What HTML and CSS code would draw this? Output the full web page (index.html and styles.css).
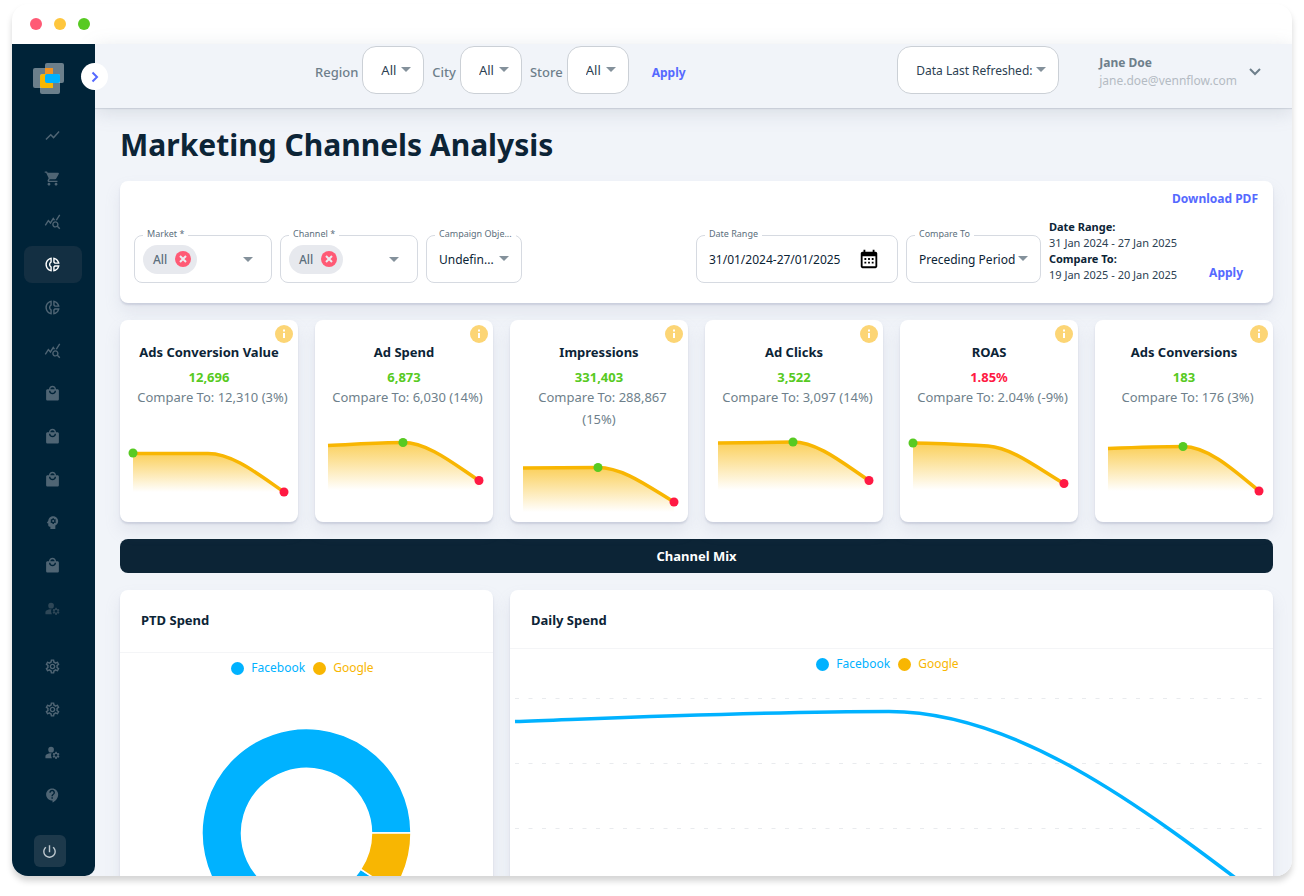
FILE: index.html
```
<!DOCTYPE html>
<html lang="en">
<head>
<meta charset="utf-8">
<meta name="viewport" content="width=device-width, initial-scale=1">
<title>Marketing Channels Analysis</title>
<link rel="stylesheet" href="styles.css">
</head>
<body>
<svg class="defs" width="0" height="0" aria-hidden="true">
  <defs>
    <linearGradient id="fade" x1="0" y1="0" x2="0" y2="1"><stop offset="0" stop-color="#f8b602" stop-opacity=".65"/><stop offset="1" stop-color="#f8b602" stop-opacity="0"/></linearGradient>
    <symbol id="i-line" viewBox="0 0 24 24"><path d="m3.5 18.49 6-6.01 4 4L22 6.92l-1.41-1.41-7.09 7.97-4-4L2 16.99z"/></symbol>
    <symbol id="i-cart" viewBox="0 0 24 24"><path d="M7 18c-1.1 0-1.99.9-1.99 2S5.900 22 7 22s2-.9 2-2-.9-2-2-2zM1 2v2h2l3.600 7.590-1.350 2.450c-.16.28-.25.61-.25.96 0 1.100.9 2 2 2h12v-2H7.420c-.14 0-.25-.11-.25-.25l.03-.12.9-1.630h7.450c.75 0 1.410-.41 1.750-1.030l3.580-6.490c.08-.14.12-.31.12-.48 0-.55-.45-1-1-1H5.210l-.94-2H1zm16 16c-1.100 0-1.990.9-1.990 2s.89 2 1.990 2 2-.9 2-2-.9-2-2-2z"/></symbol>
    <symbol id="i-query" viewBox="0 0 24 24"><path d="M19.880 18.470c.44-.7.7-1.510.7-2.390 0-2.490-2.010-4.500-4.500-4.500s-4.500 2.010-4.500 4.500 2.010 4.500 4.490 4.500c.88 0 1.700-.26 2.390-.7L21.580 23 23 21.580l-3.120-3.110zm-3.800.11c-1.380 0-2.500-1.120-2.500-2.500s1.120-2.500 2.500-2.500 2.500 1.120 2.500 2.500-1.120 2.500-2.500 2.500zm-.36-8.500c-.74.02-1.450.18-2.100.45l-.55-.83-3.800 6.180-3.010-3.520-3.630 5.810L1 17l5-8 3 3.500L13 6c1 1.330 2.720 4.080 2.720 4.080zm2.590.5c-.64-.28-1.330-.45-2.050-.49L21.380 2 23 3.180l-4.690 7.400z"/></symbol>
    <symbol id="i-donut" viewBox="0 0 24 24"><path d="M14.820 11h7.130c-.47-4.720-4.230-8.480-8.950-8.950v7.130c.85.31 1.510.97 1.820 1.820zM15 4.580C17 5.400 18.600 7 19.420 9h-3.430c-.28-.37-.62-.71-.99-.99V4.580zM2 12c0 5.190 3.950 9.450 9 9.950v-7.130C9.840 14.400 9 13.300 9 12c0-1.300.84-2.400 2-2.820V2.050c-5.050.5-9 4.760-9 9.950zm7-7.420v3.440c-1.230.92-2 2.390-2 3.980 0 1.590.77 3.060 2 3.990v3.440C6.040 18.240 4 15.350 4 12c0-3.350 2.040-6.240 5-7.420zm4 10.240v7.130c4.720-.47 8.480-4.230 8.950-8.950h-7.130c-.31.85-.97 1.510-1.820 1.820zm2 1.170c.37-.28.71-.61.99-.99h3.430C18.600 17 17 18.600 15 19.420v-3.430z"/></symbol>
    <symbol id="i-bag" viewBox="0 0 24 24"><path d="M19 6h-2c0-2.760-2.240-5-5-5S7 3.240 7 6H5c-1.100 0-1.990.9-1.990 2L3 20c0 1.100.9 2 2 2h14c1.100 0 2-.9 2-2V8c0-1.100-.9-2-2-2zm-7-3c1.660 0 3 1.340 3 3H9c0-1.660 1.340-3 3-3zm0 10c-2.760 0-5-2.240-5-5h2c0 1.660 1.340 3 3 3s3-1.340 3-3h2c0 2.760-2.240 5-5 5z"/></symbol>
    <symbol id="i-mind" viewBox="0 0 24 24"><path d="M13 8.570c-.79 0-1.430.64-1.430 1.430s.64 1.430 1.430 1.430 1.430-.64 1.430-1.430-.64-1.430-1.430-1.430z"/><path d="M13 3C9.250 3 6.200 5.940 6.020 9.640L4.100 12.200c-.25.33-.01.8.4.8H6v3c0 1.100.9 2 2 2h1v3h7v-4.680c2.360-1.120 4-3.530 4-6.320 0-3.870-3.130-7-7-7zm3 7c0 .13-.01.26-.02.39l.83.66c.08.06.1.16.05.25l-.8 1.390c-.05.09-.16.12-.24.09l-.99-.4c-.21.16-.43.29-.67.39L14 13.830c-.01.1-.1.17-.2.17h-1.600c-.1 0-.18-.07-.2-.17l-.15-1.060c-.25-.1-.47-.23-.68-.39l-.99.4c-.09.03-.2 0-.25-.09l-.8-1.390c-.05-.08-.03-.19.05-.25l.84-.66c-.01-.13-.02-.26-.02-.39s.02-.27.04-.39l-.85-.66c-.08-.06-.1-.16-.05-.26l.8-1.380c.05-.09.15-.12.24-.09l1 .4c.2-.15.43-.29.67-.39L12 6.170c.02-.1.1-.17.2-.17h1.600c.1 0 .18.07.2.17l.15 1.060c.24.1.46.23.67.39l1-.4c.09-.03.2 0 .24.09l.8 1.380c.05.09.03.2-.05.26l-.85.66c.03.12.04.25.04.39z"/></symbol>
    <symbol id="i-user" viewBox="0 0 24 24"><circle cx="10" cy="8" r="4"/><path d="M10.670 13.020c-.22-.01-.44-.02-.67-.02-2.420 0-4.680.67-6.610 1.820-.88.52-1.390 1.500-1.390 2.530V20h9.260c-.79-1.130-1.260-2.510-1.260-4 0-1.070.25-2.070.67-2.980zM20.750 16c0-.22-.03-.42-.06-.63l1.140-1.010-1-1.730-1.450.49c-.32-.27-.68-.48-1.080-.63L18 11h-2l-.3 1.490c-.4.15-.76.36-1.080.63l-1.450-.49-1 1.730 1.140 1.010c-.03.21-.06.41-.06.63s.03.42.06.63l-1.140 1.010 1 1.730 1.450-.49c.32.27.68.48 1.080.63L16 21h2l.3-1.490c.4-.15.76-.36 1.080-.63l1.450.49 1-1.730-1.140-1.010c.03-.21.06-.41.06-.63zM17 18c-1.100 0-2-.9-2-2s.9-2 2-2 2 .9 2 2-.9 2-2 2z"/></symbol>
    <symbol id="i-gear" viewBox="0 0 24 24"><path d="M19.430 12.980c.04-.32.07-.64.07-.98 0-.34-.03-.66-.07-.98l2.110-1.650c.19-.15.24-.42.12-.64l-2-3.460c-.09-.16-.26-.25-.44-.25-.06 0-.12.01-.17.03l-2.490 1c-.52-.4-1.080-.73-1.690-.98l-.38-2.650C14.460 2.180 14.250 2 14 2h-4c-.25 0-.46.18-.49.42l-.38 2.650c-.61.25-1.170.59-1.690.98l-2.490-1c-.06-.02-.12-.03-.18-.03-.17 0-.34.09-.43.25l-2 3.460c-.13.22-.07.49.12.64l2.110 1.650c-.04.32-.07.65-.07.98 0 .33.03.66.07.98l-2.110 1.650c-.19.15-.24.42-.12.64l2 3.460c.09.16.26.25.44.25.06 0 .12-.01.17-.03l2.490-1c.52.4 1.080.73 1.690.98l.38 2.650c.03.24.24.42.49.42h4c.25 0 .46-.18.49-.42l.38-2.650c.61-.25 1.170-.59 1.690-.98l2.490 1c.06.02.12.03.18.03.17 0 .34-.09.43-.25l2-3.460c.12-.22.07-.49-.12-.64l-2.110-1.650zm-1.980-1.710c.04.31.05.52.05.73 0 .21-.02.43-.05.73l-.14 1.130.89.7 1.080.84-.7 1.210-1.270-.51-1.040-.42-.9.68c-.43.32-.84.56-1.250.73l-1.060.43-.16 1.130-.2 1.350h-1.400l-.19-1.350-.16-1.130-1.060-.43c-.43-.18-.83-.41-1.230-.71l-.91-.7-1.060.43-1.270.51-.7-1.210 1.080-.84.89-.7-.14-1.130c-.03-.31-.05-.54-.05-.74s.02-.43.05-.73l.14-1.130-.89-.7-1.080-.84.7-1.210 1.270.51 1.040.42.9-.68c.43-.32.84-.56 1.250-.73l1.060-.43.16-1.130.2-1.350h1.390l.19 1.350.16 1.130 1.060.43c.43.18.83.41 1.230.71l.91.7 1.060-.43 1.270-.51.7 1.210-1.070.85-.89.7.14 1.130zM12 8c-2.210 0-4 1.790-4 4s1.790 4 4 4 4-1.790 4-4-1.790-4-4-4zm0 6c-1.100 0-2-.9-2-2s.9-2 2-2 2 .9 2 2-.9 2-2 2z"/></symbol>
    <symbol id="i-help" viewBox="0 0 24 24"><path d="M11.500 2C6.810 2 3 5.810 3 10.500S6.810 19 11.500 19h.5v3c4.860-2.340 8-7 8-11.500C20 5.810 16.190 2 11.500 2zm1 14.500h-2v-2h2v2zm0-3.500h-2c0-3.250 3-3 3-5 0-1.100-.9-2-2-2s-2 .9-2 2h-2c0-2.210 1.790-4 4-4s4 1.790 4 4c0 2.500-3 2.750-3 5z"/></symbol>
    <symbol id="i-power" viewBox="0 0 24 24"><path d="M13 3h-2v10h2V3zm4.830 2.170-1.420 1.420C17.990 7.860 19 9.810 19 12c0 3.870-3.130 7-7 7s-7-3.130-7-7c0-2.190 1.010-4.140 2.580-5.420L6.170 5.170C4.230 6.820 3 9.260 3 12c0 4.970 4.030 9 9 9s9-4.030 9-9c0-2.740-1.230-5.180-3.170-6.830z"/></symbol>
    <symbol id="i-calendar" viewBox="0 0 24 24"><path d="M19 4h-1V2h-2v2H8V2H6v2H5c-1.110 0-1.990.9-1.990 2L3 20c0 1.100.89 2 2 2h14c1.100 0 2-.9 2-2V6c0-1.100-.9-2-2-2zm0 16H5V9h14v11zM9 13H7v-2h2v2zm4 0h-2v-2h2v2zm4 0h-2v-2h2v2zm-8 4H7v-2h2v2zm4 0h-2v-2h2v2zm4 0h-2v-2h2v2z"/></symbol>
    <symbol id="i-cancel" viewBox="0 0 16 16"><circle cx="8" cy="8" r="8" fill="#ff5a75"/><path d="M5 5l6 6M11 5l-6 6" stroke="#ececf0" stroke-width="2" fill="none"/></symbol>
    <symbol id="i-info" viewBox="0 0 18 18"><circle cx="9" cy="9" r="9" fill="#fcd575"/><path d="M8 8h2v5H8zM8 4.500h2v2H8z" fill="#fff"/></symbol>
  </defs>
</svg>

<div class="window">
  <div class="titlebar"><span class="light light-red"></span><span class="light light-amber"></span><span class="light light-green"></span></div>
  <div class="app">
    <aside class="sidebar">
      <a class="logo" href="#" aria-label="Home">
        <svg viewBox="0 0 31 31" width="31" height="31">
          <g fill="#fff" fill-opacity=".42"><rect x="12" width="19" height="20" rx="2"/><rect y="5" width="20" height="20" rx="2"/><rect x="7" y="11" width="20" height="20" rx="2"/></g>
          <rect x="12" y="5" width="8" height="7" fill="#f39322"/><path d="M7 14q0-3 3-3h10v14H9q-2 0-2-2z" fill="#f8b602"/><rect x="12" y="11" width="15" height="9" rx="2" fill="#00b2ff"/>
        </svg>
      </a>
      <button class="expand" aria-label="Expand menu"><svg viewBox="0 0 12 12" width="12" height="12"><path d="M3.500 1.500L8 6l-4.500 4.500" fill="none" stroke="#5569ff" stroke-width="2"/></svg></button>
      <nav class="nav nav-main">
        <a href="#" class="item" aria-label="Trends"><svg class="icon"><use href="#i-line"/></svg></a>
        <a href="#" class="item" aria-label="Orders"><svg class="icon"><use href="#i-cart"/></svg></a>
        <a href="#" class="item" aria-label="Explore"><svg class="icon"><use href="#i-query"/></svg></a>
        <a href="#" class="item item-active" aria-label="Marketing channels"><svg class="icon"><use href="#i-donut"/></svg></a>
        <a href="#" class="item" aria-label="Segments"><svg class="icon"><use href="#i-donut"/></svg></a>
        <a href="#" class="item" aria-label="Statistics"><svg class="icon"><use href="#i-query"/></svg></a>
        <a href="#" class="item" aria-label="Products"><svg class="icon"><use href="#i-bag"/></svg></a>
        <a href="#" class="item" aria-label="Baskets"><svg class="icon"><use href="#i-bag"/></svg></a>
        <a href="#" class="item" aria-label="Sales"><svg class="icon"><use href="#i-bag"/></svg></a>
        <a href="#" class="item" aria-label="Insights"><svg class="icon"><use href="#i-mind"/></svg></a>
        <a href="#" class="item" aria-label="Stores"><svg class="icon"><use href="#i-bag"/></svg></a>
        <a href="#" class="item item-dim" aria-label="Customers"><svg class="icon"><use href="#i-user"/></svg></a>
      </nav>
      <nav class="nav nav-more">
        <a href="#" class="item" aria-label="Settings"><svg class="icon"><use href="#i-gear"/></svg></a>
        <a href="#" class="item" aria-label="Configuration"><svg class="icon"><use href="#i-gear"/></svg></a>
        <a href="#" class="item" aria-label="Accounts"><svg class="icon"><use href="#i-user"/></svg></a>
        <a href="#" class="item" aria-label="Help"><svg class="icon"><use href="#i-help"/></svg></a>
      </nav>
      <button class="power" aria-label="Sign out"><svg class="icon"><use href="#i-power"/></svg></button>
    </aside>

    <div class="main">
      <header class="topbar">
        <div class="scope">
          <label for="region">Region</label>
          <span class="select select-pill"><select id="region"><option>All</option></select></span>
          <label for="city">City</label>
          <span class="select select-pill"><select id="city"><option>All</option></select></span>
          <label for="store">Store</label>
          <span class="select select-pill"><select id="store"><option>All</option></select></span>
          <button class="link">Apply</button>
        </div>
        <div class="account">
          <span class="select select-pill select-wide"><select aria-label="Data last refreshed"><option>Data Last Refreshed:</option></select></span>
          <button class="user">
            <span class="user-text"><span class="user-name">Jane Doe</span><span class="user-mail">jane.doe@vennflow.com</span></span>
            <svg viewBox="0 0 12 8" width="12" height="8"><path d="M1 1l5 5 5-5" fill="none" stroke="#6e7f8b" stroke-width="2"/></svg>
          </button>
        </div>
      </header>

      <main class="content">
        <h1>Marketing Channels Analysis</h1>

        <section class="card filters">
          <div class="filters-top"><button class="link">Download PDF</button></div>
          <div class="filters-row">
            <div class="field field-chips">
              <label for="market">Market *</label>
              <span class="chip">All <button aria-label="Remove"><svg width="16" height="16"><use href="#i-cancel"/></svg></button></span>
              <input id="market" type="text">
              <span class="caret"></span>
            </div>
            <div class="field field-chips">
              <label for="channel">Channel *</label>
              <span class="chip">All <button aria-label="Remove"><svg width="16" height="16"><use href="#i-cancel"/></svg></button></span>
              <input id="channel" type="text">
              <span class="caret"></span>
            </div>
            <div class="field field-objective select">
              <label for="objective">Campaign Obje...</label>
              <select id="objective"><option>Undefin...</option></select>
            </div>
            <div class="field field-dates">
              <label for="dates">Date Range</label>
              <input id="dates" type="text" value="31/01/2024-27/01/2025">
              <button class="calendar" aria-label="Choose dates"><svg width="22" height="22"><use href="#i-calendar"/></svg></button>
            </div>
            <div class="field field-compare select">
              <label for="compare">Compare To</label>
              <select id="compare"><option>Preceding Period</option></select>
            </div>
            <dl class="ranges"><dt>Date Range:</dt><dd>31 Jan 2024 - 27 Jan 2025</dd><dt>Compare To:</dt><dd>19 Jan 2025 - 20 Jan 2025</dd></dl>
            <button class="link apply">Apply</button>
          </div>
        </section>

        <section class="kpis">
          <article class="card kpi">
            <button class="info" aria-label="About Ads Conversion Value"><svg width="18" height="18"><use href="#i-info"/></svg></button>
            <h2>Ads Conversion Value</h2><strong class="up">12,696</strong><p>Compare To: 12,310 (3%)</p>
            <svg class="spark" viewBox="0 0 178 70"><path class="area" d="M13 25.500H88C113 25.500 139 47 164 64H13z"/><path class="stroke" d="M13 25.500H88C113 25.500 139 47 164 64"/><circle class="hi" cx="13" cy="25" r="4.500"/><circle class="lo" cx="164" cy="64" r="4.500"/></svg>
          </article>
          <article class="card kpi">
            <button class="info" aria-label="About Ad Spend"><svg width="18" height="18"><use href="#i-info"/></svg></button>
            <h2>Ad Spend</h2><strong class="up">6,873</strong><p>Compare To: 6,030 (14%)</p>
            <svg class="spark" viewBox="0 0 178 70"><path class="area" d="M13 17.500C38 16.500 63 14.500 88 14.500C113 14.500 139 36 164 52.500V62H13z"/><path class="stroke" d="M13 17.500C38 16.500 63 14.500 88 14.500C113 14.500 139 36 164 52.500"/><circle class="hi" cx="88" cy="14.500" r="4.500"/><circle class="lo" cx="164" cy="52.500" r="4.500"/></svg>
          </article>
          <article class="card kpi">
            <button class="info" aria-label="About Impressions"><svg width="18" height="18"><use href="#i-info"/></svg></button>
            <h2>Impressions</h2><strong class="up">331,403</strong><p>Compare To: 288,867 (15%)</p>
            <svg class="spark" viewBox="0 0 178 70"><path class="area" d="M13 18L88 17.500C113 17.500 139 37 164 52V62H13z"/><path class="stroke" d="M13 18L88 17.500C113 17.500 139 37 164 52"/><circle class="hi" cx="88" cy="17.500" r="4.500"/><circle class="lo" cx="164" cy="52" r="4.500"/></svg>
          </article>
          <article class="card kpi">
            <button class="info" aria-label="About Ad Clicks"><svg width="18" height="18"><use href="#i-info"/></svg></button>
            <h2>Ad Clicks</h2><strong class="up">3,522</strong><p>Compare To: 3,097 (14%)</p>
            <svg class="spark" viewBox="0 0 178 70"><path class="area" d="M13 15L88 14C113 14 139 36 164 52.500V62H13z"/><path class="stroke" d="M13 15L88 14C113 14 139 36 164 52.500"/><circle class="hi" cx="88" cy="14" r="4.500"/><circle class="lo" cx="164" cy="52.500" r="4.500"/></svg>
          </article>
          <article class="card kpi">
            <button class="info" aria-label="About ROAS"><svg width="18" height="18"><use href="#i-info"/></svg></button>
            <h2>ROAS</h2><strong class="down">1.85%</strong><p>Compare To: 2.04% (-9%)</p>
            <svg class="spark" viewBox="0 0 178 70"><path class="area" d="M13 15C38 15 63 16.500 88 18C113 20 139 41 164 55.500V62H13z"/><path class="stroke" d="M13 15C38 15 63 16.500 88 18C113 20 139 41 164 55.500"/><circle class="hi" cx="13" cy="15" r="4.500"/><circle class="lo" cx="164" cy="55.500" r="4.500"/></svg>
          </article>
          <article class="card kpi">
            <button class="info" aria-label="About Ads Conversions"><svg width="18" height="18"><use href="#i-info"/></svg></button>
            <h2>Ads Conversions</h2><strong class="up">183</strong><p>Compare To: 176 (3%)</p>
            <svg class="spark" viewBox="0 0 178 70"><path class="area" d="M13 20.500C38 19.500 63 18.500 88 18.500C113 18.500 139 42 164 63H13z"/><path class="stroke" d="M13 20.500C38 19.500 63 18.500 88 18.500C113 18.500 139 42 164 63"/><circle class="hi" cx="88" cy="18.500" r="4.500"/><circle class="lo" cx="164" cy="63" r="4.500"/></svg>
          </article>
        </section>

        <h2 class="banner">Channel Mix</h2>

        <section class="charts">
          <article class="card chart">
            <h3>PTD Spend</h3>
            <ul class="legend"><li class="facebook">Facebook</li><li class="google">Google</li></ul>
            <svg class="plot" viewBox="0 0 373 260" role="img" aria-label="Spend by channel">
              <g stroke="#fff" stroke-width="1.500"><path fill="#00b2ff" d="M291 152A104.500 104.500 0 1 0 273.500 210L240.700 188.200A65 65 0 1 1 251.500 152z"/><path fill="#f8b602" d="M291 152A104.500 104.500 0 0 1 273.500 210L240.700 188.200A65 65 0 0 0 251.500 152z"/></g>
            </svg>
          </article>
          <article class="card chart chart-wide">
            <h3>Daily Spend</h3>
            <ul class="legend"><li class="facebook">Facebook</li><li class="google">Google</li></ul>
            <svg class="plot" viewBox="0 0 763 240" role="img" aria-label="Spend by day">
              <path class="grid" d="M5 21.500H755M5 86.500H755M5 151.500H755"/>
              <path fill="none" stroke="#00b2ff" stroke-width="3.500" d="M5 44.500C129 40 254 34.500 379 34.500C504 34.500 628 126 753 222"/>
            </svg>
          </article>
        </section>
      </main>
    </div>
  </div>
</div>
</body>
</html>
```
FILE: styles.css
```
* { box-sizing: border-box; }
body {
  margin: 0;
  height: 100vh;
  padding: 4px 12px 20px;
  display: flex;
  flex-direction: column;
  background: #fff;
  color: #0c2436;
  font-family: "Noto Sans", "Open Sans", sans-serif;
  font-size: 13px;
}
h1, h2, h3, p, ul, dl, dd { margin: 0; padding: 0; }
button, input, select { font: inherit; color: inherit; border: 0; background: none; padding: 0; margin: 0; min-width: 0; }
button { cursor: pointer; }
svg { display: block; }
.defs { position: absolute; }

.window {
  flex: 1;
  min-height: 0;
  display: flex;
  flex-direction: column;
  border-radius: 16px;
  box-shadow: 0 5px 6px rgba(0, 0, 0, .17);
  overflow: hidden;
  background: #fff;
}
.titlebar { flex: none; height: 40px; display: flex; align-items: center; gap: 12px; padding: 0 18px; }
.light { width: 12px; height: 12px; border-radius: 50%; }
.light-red { background: #ff5a75; }
.light-amber { background: #fec63d; }
.light-green { background: #57ca22; }
.app { flex: 1; min-height: 0; display: flex; background: #f1f4f9; }

.sidebar {
  position: relative;
  z-index: 2;
  flex: none;
  width: 83px;
  display: flex;
  flex-direction: column;
  align-items: center;
  padding: 19px 2px 9px 0;
  background: #002338;
  border-radius: 0 0 10px 10px;
}
.logo { margin-right: 8px; }
.expand {
  position: absolute;
  top: 19px;
  right: -13px;
  width: 27px;
  height: 27px;
  border-radius: 50%;
  background: #fff;
  display: grid;
  place-items: center;
}
.nav { display: flex; flex-direction: column; gap: 6px; }
.nav-main { margin-top: 23px; }
.nav-more { margin-top: 21px; }
.item { width: 58px; height: 37px; border-radius: 8px; display: grid; place-items: center; color: #4f6574; }
.item-active { background: #132f42; color: #fff; }
.item-dim { color: #2e4757; }
.icon { width: 17px; height: 17px; fill: currentColor; }
.power { margin-top: auto; margin-right: 6px; width: 32px; height: 32px; border-radius: 6px; background: #1d394b; color: #bcc6cd; display: grid; place-items: center; }

.main { flex: 1; min-width: 0; display: flex; flex-direction: column; }
.topbar {
  position: relative;
  z-index: 1;
  flex: none;
  height: 64px;
  display: flex;
  justify-content: space-between;
  align-items: flex-start;
  padding: 2px 31px 0 220px;
  background: #f1f4f9;
  box-shadow: 0 1px 1px rgba(120, 130, 150, .2), 0 4px 18px rgba(120, 130, 150, .22);
}
.scope, .account { display: flex; align-items: center; }
.scope label { color: #6e7f8b; font-weight: 500; margin-right: 4px; padding-top: 4px; }
.scope .select { margin-right: 8px; }
.scope .link { margin-left: 15px; padding-top: 4px; }
.link { color: #5569ff; font-weight: 700; font-size: 12px; }
.select { position: relative; display: flex; align-items: center; }
.select::after, .caret {
  content: "";
  border: 5px solid transparent;
  border-top-color: #84919b;
  border-bottom: 0;
  pointer-events: none;
}
.select::after { position: absolute; right: 12px; top: 20px; }
.select select { appearance: none; width: 100%; height: 46px; outline: 0; }
.select-pill { width: 62px; height: 48px; background: #fff; border: 1px solid #cbd0d6; border-radius: 14px; font-size: 13px; }
.select-pill select { padding-left: 18px; color: #2c4152; }
.select-wide { width: 162px; font-size: 12px; }
.select-wide select { padding-left: 18px; }
.user { display: flex; align-items: center; gap: 12px; margin-left: 40px; padding-top: 4px; text-align: left; }
.user-text { display: flex; flex-direction: column; line-height: 18px; font-size: 12px; }
.user-name { font-weight: 700; color: #6e7f8b; }
.user-mail { color: #b4bbc3; }

.content { flex: 1; min-height: 0; overflow: hidden; padding: 12px 19px 0 25px; }
h1 { font-size: 30px; line-height: 50px; font-weight: 700; margin-bottom: 11px; }
.card { background: #fff; border-radius: 8px; box-shadow: 0 9px 16px rgba(149, 156, 180, .16), 0 2px 2px rgba(149, 156, 180, .32); }

.filters { padding: 9px 15px 20px 14px; }
.filters-top { display: flex; justify-content: flex-end; line-height: 18px; margin-bottom: 11px; }
.filters-row { display: flex; align-items: flex-end; gap: 8px; }
.field { position: relative; height: 48px; border: 1px solid #d6dae1; border-radius: 8px; display: flex; align-items: center; }
.field label { position: absolute; top: -8px; left: 8px; padding: 0 4px; background: #fff; font-size: 9px; line-height: 12px; color: #5c6f7d; white-space: nowrap; }
.field input { outline: 0; }
.field-chips { width: 138px; padding-left: 8px; }
.field-chips input { flex: 1; }
.chip { display: flex; align-items: center; gap: 8px; height: 29px; padding: 0 6px 0 10px; border-radius: 15px; background: #e7e9ee; color: #5c6f7d; font-weight: 500; font-size: 12px; }
.caret { margin-right: 18px; }
.field-objective { width: 96px; }
.field.select select { padding-left: 12px; font-size: 12px; }
.field-dates { width: 202px; margin-left: auto; padding: 0 17px 0 12px; font-size: 12px; }
.field-dates input { flex: 1; }
.field-compare { width: 135px; }
.ranges { font-size: 11px; line-height: 16px; white-space: nowrap; }
.ranges dt { font-weight: 700; }
.ranges dd { color: #2c4152; }
.apply { margin: 0 15px 2px 24px; }

.kpis, .charts { display: grid; grid-template-columns: repeat(12, 1fr); gap: 17px; }
.kpis { margin: 17px 0; }
.kpi { position: relative; grid-column: span 2; min-height: 202px; padding-top: 20px; text-align: center; }
.kpi h2 { font-size: 13px; line-height: 24px; }
.kpi strong { display: block; margin-top: 4px; font-size: 13px; line-height: 18px; }
.kpi p { padding: 0 8px; font-size: 13px; line-height: 22px; text-indent: 7px; color: #6e7f8b; }
.up { color: #57ca22; }
.down { color: #ff1943; }
.info { position: absolute; top: 5px; right: 5px; }
.spark { width: 100%; margin-top: 20px; }
.area { fill: url(#fade); }
.stroke { fill: none; stroke: #f8b602; stroke-width: 3.5; }
.hi { fill: #57ca22; }
.lo { fill: #ff1943; }

.banner { margin-bottom: 17px; border-radius: 8px; background: #0c2436; color: #fff; text-align: center; font-size: 13px; line-height: 34px; }
.chart { grid-column: span 4; }
.chart-wide { grid-column: span 8; }
.chart h3 { padding: 18px 21px 20px; border-bottom: 1px solid #f4f5f7; font-size: 13px; line-height: 24px; }
.chart-wide h3 { padding-bottom: 16px; }
.legend { list-style: none; display: flex; justify-content: center; gap: 8px; padding: 5px 8px 0 0; line-height: 20px; font-size: 12px; }
.legend li { display: flex; align-items: center; gap: 7px; }
.legend li::before { content: ""; width: 13px; height: 13px; border-radius: 50%; background: currentColor; }
.facebook { color: #00b2ff; }
.google { color: #f8b602; }
.plot { width: 100%; margin-top: 3px; }
.grid { stroke: #e9ebee; stroke-dasharray: 4 9.5; }
```
